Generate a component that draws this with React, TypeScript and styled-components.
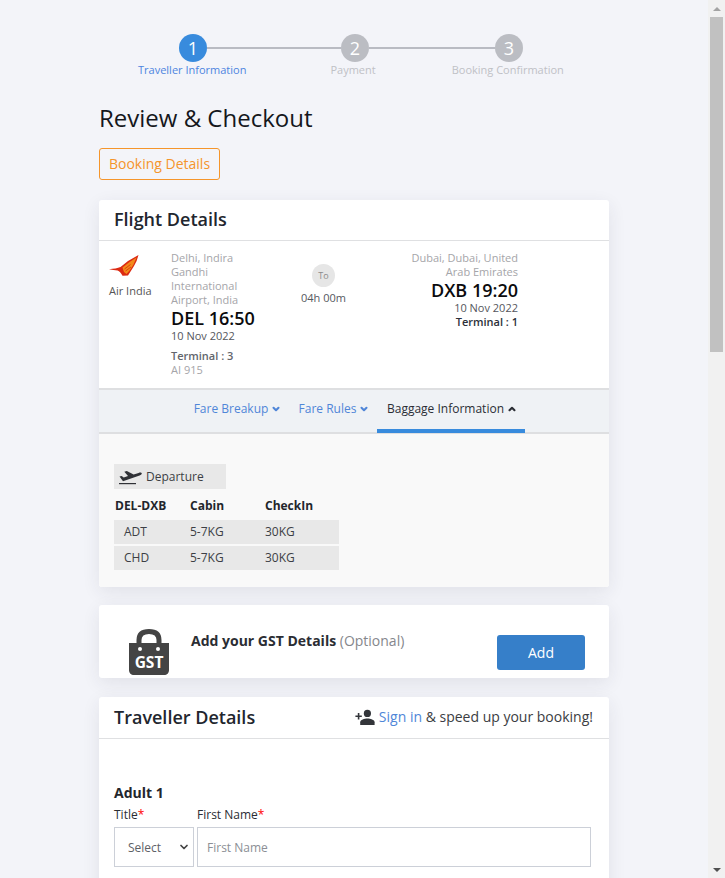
import React from "react";
import styled, { createGlobalStyle } from "styled-components";
import { ChevronDown, ChevronUp } from "lucide-react";

const Global = createGlobalStyle`
  html, body { margin: 0; padding: 0; height: 100%; overflow: hidden; }
  body { font-family: "Open Sans", "Noto Sans", sans-serif; background: #f3f4f9; color: #222; }
  * { box-sizing: border-box; }
`;

const Shell = styled.div`
  display: flex;
  width: 725px;
  height: 878px;
  overflow: hidden;
`;
const Page = styled.main`
  flex: 1;
  min-width: 0;
  padding: 34px 99px 0;
  height: 878px;
  overflow: hidden;
`;
const Scrollbar = styled.div`
  width: 17px;
  height: 878px;
  background: #f1f1f1;
  display: flex;
  flex-direction: column;
  align-items: center;
`;
const ScrollArrow = styled.div<{ $down?: boolean }>`
  height: 17px;
  width: 17px;
  display: flex;
  align-items: center;
  justify-content: center;
  &::before {
    content: "";
    border-left: 4px solid transparent;
    border-right: 4px solid transparent;
    ${(p) => (p.$down ? "border-top: 4px solid #505050;" : "border-bottom: 4px solid #a3a3a3;")}
  }
`;
const ScrollThumb = styled.div`
  width: 13px;
  height: 335px;
  background: #c1c1c1;
`;
const ScrollTrack = styled.div`
  flex: 1;
`;

const CircleRow = styled.div`
  display: flex;
  align-items: center;
  padding-left: 80px;
  height: 28px;
`;
const Circle = styled.div<{ $active?: boolean }>`
  width: 28px;
  height: 28px;
  flex: none;
  border-radius: 50%;
  background: ${(p) => (p.$active ? "#388bdd" : "#bbbdc3")};
  color: #fff;
  font-size: 18px;
  line-height: 28px;
  text-align: center;
`;
const Connector = styled.div<{ $w: number }>`
  width: ${(p) => p.$w}px;
  height: 2px;
  background: #b9bbc3;
  flex: none;
`;
const LabelRow = styled.div`
  display: flex;
  padding-left: 39px;
  height: 15px;
`;
const StepLabel = styled.div<{ $active?: boolean; $ml?: number }>`
  font-size: 11px;
  line-height: 15px;
  white-space: nowrap;
  margin-left: ${(p) => p.$ml ?? 0}px;
  color: ${(p) => (p.$active ? "#4d84e0" : "#bfc1c6")};
`;
const PageTitle = styled.h1`
  margin: 24px 0 0;
  font-size: 24px;
  font-weight: 400;
  line-height: 33px;
  color: #15171c;
`;
const OutlineButton = styled.button`
  display: block;
  margin-top: 14px;
  width: 121px;
  height: 32px;
  padding: 0 0 2px;
  background: transparent;
  border: 1px solid #f5952b;
  border-radius: 3px;
  color: #f5952b;
  font-family: inherit;
  font-size: 14px;
`;
const Card = styled.section<{ $mt: number }>`
  margin-top: ${(p) => p.$mt}px;
  background: #fff;
  border-radius: 3px;
  box-shadow: 0 5px 18px rgba(40, 44, 70, 0.09);
`;
const CardHeader = styled.div<{ $h: number }>`
  display: flex;
  align-items: center;
  justify-content: space-between;
  height: ${(p) => p.$h}px;
  padding: 0 16px 2px 15px;
  border-bottom: 1px solid #dfe0e2;
`;
const CardTitle = styled.h2`
  margin: 0;
  font-size: 18px;
  font-weight: 600;
  line-height: 38px;
  color: #22262e;
`;
const FlightRow = styled.div`
  display: flex;
  height: 147px;
  padding: 10px 0 0 10px;
`;
const Airline = styled.div`
  width: 51px;
  flex: none;
  padding-top: 4px;
  font-size: 11px;
  line-height: 15px;
  color: #555;
  white-space: nowrap;
`;
const LogoSvg = styled.svg`
  display: block;
  width: 30px;
  height: 21px;
  margin-bottom: 7px;
`;
const Leg = styled.div<{ $right?: boolean }>`
  width: ${(p) => (p.$right ? "134px" : "92px")};
  margin-left: ${(p) => (p.$right ? "0" : "11px")};
  flex: none;
  text-align: ${(p) => (p.$right ? "right" : "left")};
`;
const Place = styled.div<{ $right?: boolean }>`
  font-size: 11px;
  line-height: 14px;
  color: #a5a5a9;
  ${(p) => (p.$right ? "padding-left: 26px;" : "")}
`;
const Time = styled.div`
  font-size: 18px;
  font-weight: 600;
  line-height: 22px;
  color: #0b0b0d;
  white-space: nowrap;
`;
const LegDate = styled.div`
  font-size: 11px;
  line-height: 14px;
  color: #54565c;
  white-space: nowrap;
`;
const Terminal = styled.div<{ $gap?: number; $dark?: boolean }>`
  margin-top: ${(p) => p.$gap ?? 0}px;
  font-size: 11px;
  font-weight: 600;
  line-height: 13px;
  color: ${(p) => (p.$dark ? "#2c3039" : "#62656c")};
`;
const FlightNo = styled.div`
  font-size: 11px;
  line-height: 16px;
  color: #a5a5a9;
`;
const Middle = styled.div`
  width: 121px;
  flex: none;
  display: flex;
  flex-direction: column;
  align-items: center;
  padding-top: 13px;
`;
const ToBadge = styled.div`
  width: 23px;
  height: 23px;
  border-radius: 50%;
  background: #e6e6e6;
  color: #8b8b8b;
  font-size: 9px;
  line-height: 23px;
  text-align: center;
`;
const Duration = styled.div`
  margin-top: 3px;
  font-size: 11px;
  line-height: 16px;
  color: #55585e;
`;
const TabBar = styled.nav`
  display: flex;
  justify-content: flex-start;
  height: 46px;
  padding-left: 85px;
  background: #eff2f5;
  border-top: 2px solid #dedfe1;
  border-bottom: 2px solid #dedfe1;
`;
const Tab = styled.div<{ $active?: boolean; $w: number }>`
  display: flex;
  align-items: center;
  justify-content: center;
  gap: 3px;
  width: ${(p) => p.$w}px;
  height: 43px;
  padding: 0 0 2px 2px;
  font-size: 12px;
  white-space: nowrap;
  color: ${(p) => (p.$active ? "#2b2e35" : "#4f86d8")};
  border-bottom: 4px solid ${(p) => (p.$active ? "#388bdd" : "transparent")};
`;
const Panel = styled.div`
  height: 153px;
  padding: 30px 15px 0;
  background: #f9f9f9;
  border-radius: 0 0 3px 3px;
`;
const DepartureChip = styled.div`
  display: flex;
  align-items: center;
  gap: 4px;
  width: 112px;
  height: 25px;
  padding-left: 4px;
  background: #e8e8e8;
  font-size: 12px;
  color: #3c3f45;
`;
const BagHead = styled.div`
  display: grid;
  grid-template-columns: 75px 75px 1fr;
  width: 225px;
  height: 31px;
  align-items: center;
  padding: 2px 0 0 1px;
  font-size: 12px;
  font-weight: 700;
  color: #23262c;
`;
const BagRow = styled.div`
  display: grid;
  grid-template-columns: 76px 75px 1fr;
  width: 225px;
  height: 24px;
  margin-bottom: 2px;
  padding-bottom: 1px;
  align-items: center;
  background: #e8e8e8;
  font-size: 12px;
  color: #3c3f45;
`;
const BagFirst = styled.span`
  padding-left: 10px;
`;
const GstBody = styled.div`
  display: flex;
  height: 73px;
  padding: 24px 24px 0 30px;
`;
const GstIcon = styled.svg`
  width: 40px;
  height: 46px;
  flex: none;
`;
const GstText = styled.div`
  flex: 1;
  margin-left: 22px;
  margin-top: 2px;
  font-size: 14px;
  line-height: 20px;
  font-weight: 700;
  color: #2b2d33;
`;
const Optional = styled.span`
  font-weight: 400;
  color: #85878c;
`;
const AddButton = styled.button`
  width: 88px;
  height: 35px;
  margin-top: 6px;
  padding: 0;
  border: none;
  border-radius: 3px;
  background: #367fc9;
  color: #fff;
  font-family: inherit;
  font-size: 14px;
`;
const SignIn = styled.div`
  display: flex;
  align-items: center;
  gap: 4px;
  font-size: 14px;
  color: #3b3d42;
  white-space: nowrap;
`;
const SignLink = styled.span`
  color: #4f86d8;
`;
const TravellerBody = styled.div`
  padding: 44px 18px 40px 15px;
`;
const Adult = styled.h3`
  margin: 0;
  font-size: 14px;
  font-weight: 700;
  line-height: 20px;
  color: #23262c;
`;
const FormRow = styled.div`
  display: grid;
  grid-template-columns: 80px 1fr;
  column-gap: 3px;
  margin-top: 4px;
`;
const Field = styled.label`
  display: block;
  font-size: 12px;
  line-height: 16px;
  color: #2b2d33;
  white-space: nowrap;
`;
const Req = styled.span`
  color: #f00;
`;
const SelectBox = styled.div`
  display: flex;
  align-items: center;
  justify-content: space-between;
  height: 40px;
  margin-top: 4px;
  padding: 0 3px 0 13px;
  border: 1px solid #ccd0d8;
  background: #fff;
  font-size: 12px;
  color: #5e6167;
`;
const InputBox = styled.input`
  display: block;
  width: 100%;
  height: 40px;
  margin-top: 4px;
  padding: 0 9px;
  border: 1px solid #ccd0d8;
  border-radius: 0;
  outline: none;
  font-family: inherit;
  font-size: 12px;
  &::placeholder { color: #8c8f95; opacity: 1; }
`;

export default function App() {
  return (
    <>
      <Global />
      <Shell>
        <Page>
          <CircleRow>
            <Circle $active>1</Circle>
            <Connector $w={134} />
            <Circle>2</Circle>
            <Connector $w={126} />
            <Circle>3</Circle>
          </CircleRow>
          <LabelRow>
            <StepLabel $active>Traveller Information</StepLabel>
            <StepLabel $ml={84}>Payment</StepLabel>
            <StepLabel $ml={76}>Booking Confirmation</StepLabel>
          </LabelRow>
          <PageTitle>Review &amp; Checkout</PageTitle>
          <OutlineButton>Booking Details</OutlineButton>

          <Card $mt={20}>
            <CardHeader $h={41}>
              <CardTitle>Flight Details</CardTitle>
            </CardHeader>
            <FlightRow>
              <Airline>
                <LogoSvg viewBox="0 0 30 21">
                  <path d="M0 14.2 C5 13.6 8.5 13.4 11.5 12 L19 6 L29.5 0 L27.6 6 L25 11 L22.5 15 L19 20.5 L13.5 20.8 C11.8 18 10.5 16.2 8.6 15.6 C6 15 3 14.8 0 14.2Z" fill="#dc2a12" />
                  <path d="M13.5 12.5 L20.500 7 L27.500 2.500 L24.500 9.500 L21 15 L17.500 19 L15 17 Z" fill="#f28a1a" />
                  <path d="M15.5 14 L21.500 9.500 M16.500 16 L22 12" stroke="#dc2a12" strokeWidth="0.8" fill="none" />
                </LogoSvg>
                Air India
              </Airline>
              <Leg>
                <Place>Delhi, Indira Gandhi International Airport, India</Place>
                <Time>DEL 16:50</Time>
                <LegDate>10 Nov 2022</LegDate>
                <Terminal $gap={6}>Terminal : 3</Terminal>
                <FlightNo>AI 915</FlightNo>
              </Leg>
              <Middle>
                <ToBadge>To</ToBadge>
                <Duration>04h 00m</Duration>
              </Middle>
              <Leg $right>
                <Place $right>Dubai, Dubai, United Arab Emirates</Place>
                <Time>DXB 19:20</Time>
                <LegDate>10 Nov 2022</LegDate>
                <Terminal $dark>Terminal : 1</Terminal>
              </Leg>
            </FlightRow>
            <TabBar>
              <Tab $w={105}>Fare Breakup <ChevronDown size={10} strokeWidth={5} /></Tab>
              <Tab $w={88}>Fare Rules <ChevronDown size={10} strokeWidth={5} /></Tab>
              <Tab $w={148} $active>Baggage Information <ChevronUp size={10} strokeWidth={5} /></Tab>
            </TabBar>
            <Panel>
              <DepartureChip>
                <svg width="24" height="16" viewBox="0 0 24 16" fill="#2f3136">
                  <path d="M1 14h17v1.200H1z" />
                  <path d="M1.500 7.500l2.200-.6 2 1.500 4.300-1.300-3.700-4.400 2.500-.7 6.800 3.600 5-1.700c1.600-.5 3-.3 3.200.4.200.8-.8 1.500-2.200 2.100L5 12.300z" />
                </svg>
                Departure
              </DepartureChip>
              <BagHead><span>DEL-DXB</span><span>Cabin</span><span>CheckIn</span></BagHead>
              <BagRow><BagFirst>ADT</BagFirst><span>5-7KG</span><span>30KG</span></BagRow>
              <BagRow><BagFirst>CHD</BagFirst><span>5-7KG</span><span>30KG</span></BagRow>
            </Panel>
          </Card>

          <Card $mt={18}>
            <GstBody>
              <GstIcon viewBox="0 0 40 46">
                <path d="M10 16 V11 C10 5 14 2.500 20 2.500 C26 2.500 30 5 30 11 V16" fill="none" stroke="#444" strokeWidth="5" />
                <path d="M0 14 H40 V41 C40 44 38 46 35 46 H5 C2 46 0 44 0 41 Z" fill="#444" />
                <circle cx="11" cy="20" r="2" fill="#fff" />
                <circle cx="29" cy="20" r="2" fill="#fff" />
                <text x="20" y="38.500" textAnchor="middle" fontFamily="Open Sans" fontWeight="700" fontSize="15.5" fill="#fff">GST</text>
              </GstIcon>
              <GstText>Add your GST Details <Optional>(Optional)</Optional></GstText>
              <AddButton>Add</AddButton>
            </GstBody>
          </Card>

          <Card $mt={19}>
            <CardHeader $h={42}>
              <CardTitle>Traveller Details</CardTitle>
              <SignIn>
                <svg width="20" height="16" viewBox="0 0 24 20" fill="#33353a">
                  <circle cx="15" cy="5.500" r="4.500" />
                  <path d="M15 12c-3.500 0-9 1.600-9 4.600V20h18v-3.400c0-3-5.500-4.600-9-4.600z" />
                  <path d="M5 8V5H3v3H0v2h3v3h2v-3h3V8H5z" />
                </svg>
                <span><SignLink>Sign in</SignLink> &amp; speed up your booking!</span>
              </SignIn>
            </CardHeader>
            <TravellerBody>
              <Adult>Adult 1</Adult>
              <FormRow>
                <div>
                  <Field>Title<Req>*</Req></Field>
                  <SelectBox>Select <ChevronDown size={12} strokeWidth={3.5} color="#444" /></SelectBox>
                </div>
                <div>
                  <Field>First Name<Req>*</Req></Field>
                  <InputBox placeholder="First Name" readOnly />
                </div>
              </FormRow>
            </TravellerBody>
          </Card>
        </Page>
        <Scrollbar>
          <ScrollArrow />
          <ScrollThumb />
          <ScrollTrack />
          <ScrollArrow $down />
        </Scrollbar>
      </Shell>
    </>
  );
}
